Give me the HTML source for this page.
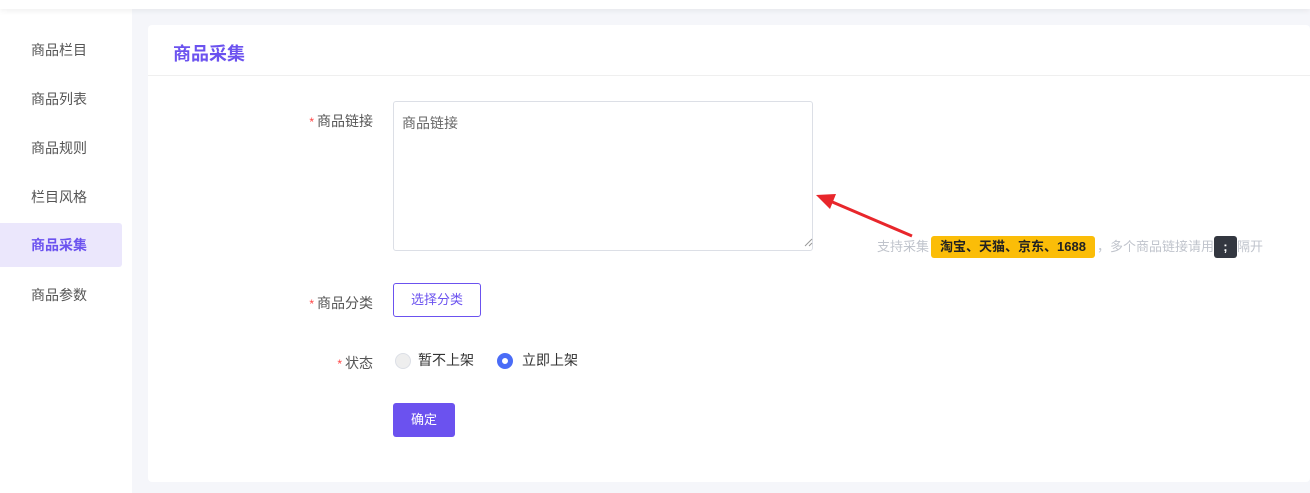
<!DOCTYPE html>
<html><head><meta charset="utf-8"><style>
*{margin:0;padding:0;box-sizing:border-box}
body{width:1310px;height:493px;background:#f5f6fa;font-family:"Liberation Sans","Noto Sans CJK SC",sans-serif;position:relative;overflow:hidden;font-size:13px}
.top{position:absolute;left:0;top:0;width:1310px;height:9px;background:#fff;box-shadow:0 2px 6px rgba(0,0,0,.06);z-index:5}
.side{position:absolute;left:0;top:9px;width:132px;height:484px;background:#fff}
.side div{position:absolute;left:31px;font-size:14px;color:#555;}
.act{position:absolute;left:0;top:223px;width:122px;height:44px;background:#ebe7fc;border-radius:0 3px 3px 0}
.card{position:absolute;left:148px;top:25px;width:1162px;height:457px;background:#fff;border-radius:4px}
.title{position:absolute;left:25px;top:15px;font-size:18px;font-weight:bold;color:#6b52ef}
.hr{position:absolute;left:0;top:50px;width:100%;height:1px;background:#efefef}
.lab{position:absolute;font-size:14px;color:#555;text-align:right}
.lab b{color:#f44;font-weight:normal;margin-right:3px;font-size:12px}
.ta{position:absolute;left:393px;top:101px;width:420px;height:150px;border:1px solid #dcdfe6;border-radius:3px;color:#666;padding:11px 8px;font-size:14px}
.btn{position:absolute;left:393px;top:283px;width:88px;height:34px;border:1px solid #6b52ef;border-radius:3px;color:#6b52ef;text-align:center;line-height:32px}
.ok{position:absolute;left:393px;top:403px;width:62px;height:34px;background:#6b52ef;border-radius:3px;color:#fff;text-align:center;line-height:34px}
.r{position:absolute;width:16px;height:16px;border-radius:50%}
</style></head><body>
<div class="top"></div>
<div class="side">
<div style="top:31px">商品栏目</div>
<div style="top:80px">商品列表</div>
<div style="top:129px">商品规则</div>
<div style="top:178px">栏目风格</div>
<div style="top:276px">商品参数</div>
</div>
<div class="act"></div>
<div style="position:absolute;left:31px;top:235px;font-size:14px;font-weight:bold;color:#6b52ef">商品采集</div>
<div class="card"><div class="title">商品采集</div><div class="hr"></div></div>
<div class="lab" style="left:290px;top:111px;width:83px"><b>*</b>商品链接</div>
<div class="ta">商品链接</div>
<svg style="position:absolute;left:803px;top:237px" width="10" height="10"><path d="M9 2L2 9M9 6L6 9" stroke="#999" stroke-width="1"/></svg>
<svg style="position:absolute;left:0;top:0" width="1310" height="493"><line x1="912" y1="236" x2="830" y2="201" stroke="#e8262b" stroke-width="3"/><polygon points="816,195 836,194 830,209" fill="#e8262b"/></svg>
<div style="position:absolute;left:877px;top:236px;font-size:13px;color:#c0c4cc;white-space:nowrap">支持采集<span style="display:inline-block;background:#fbbd08;color:#222;font-weight:bold;padding:0 9px;height:22px;line-height:22px;border-radius:3px;margin:0 2px">淘宝、天猫、京东、1688</span>，多个商品链接请用<span style="display:inline-block;background:#333740;color:#fff;font-weight:bold;width:23px;text-align:center;height:22px;line-height:22px;border-radius:3px">;</span>隔开</div>
<div class="lab" style="left:290px;top:293px;width:83px"><b>*</b>商品分类</div>
<div class="btn">选择分类</div>
<div class="lab" style="left:290px;top:353px;width:83px"><b>*</b>状态</div>
<div class="r" style="left:395px;top:353px;background:#eee;border:1px solid #dcdfe6"></div>
<div style="position:absolute;left:418px;top:350px;color:#333;font-size:14px">暂不上架</div>
<div class="r" style="left:497px;top:353px;border:5px solid #4a6cf7;background:#fff"></div>
<div style="position:absolute;left:522px;top:350px;color:#333;font-size:14px">立即上架</div>
<div class="ok">确定</div>
</body></html>
